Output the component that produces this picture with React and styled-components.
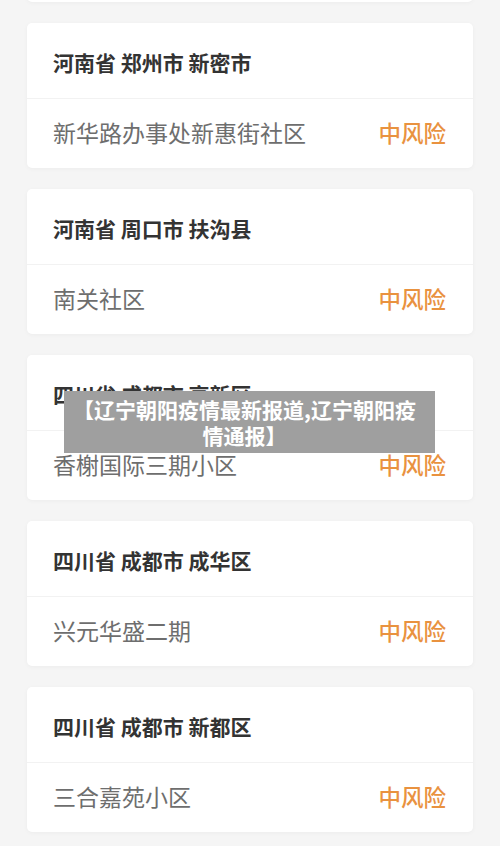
import React from "react";
import styled, { createGlobalStyle } from "styled-components";

const Global = createGlobalStyle`
  html, body { margin: 0; padding: 0; background: #f5f5f5; }
  body { font-family: "Noto Sans CJK SC", "Noto Sans", sans-serif; overflow: hidden; }
`;

const Page = styled.div`
  position: relative;
  width: 500px;
  height: 846px;
  overflow: hidden;
  background: #f5f5f5;
`;

const List = styled.div`
  display: flex;
  flex-direction: column;
  gap: 21px;
  padding: 0 27px;
  margin-top: -143px;
`;

const Card = styled.div`
  background: #ffffff;
  border-radius: 5px;
  box-shadow: 0 1px 4px rgba(0, 0, 0, 0.04);
  display: flex;
  flex-direction: column;
`;

const Header = styled.div`
  box-sizing: border-box;
  height: 76px;
  padding: 3px 26px 0;
  display: flex;
  align-items: center;
  font-size: 21px;
  font-weight: 700;
  color: #333333;
  border-bottom: 1px solid #f2f2f2;
  white-space: pre;
`;

const Body = styled.div`
  box-sizing: border-box;
  height: 69px;
  padding: 0 27px 3px 26px;
  display: flex;
  align-items: center;
  justify-content: space-between;
`;

const Place = styled.span`
  font-size: 23px;
  color: #6e6e6e;
  font-weight: 400;
`;

const Risk = styled.span`
  font-size: 22.5px;
  font-weight: 500;
  color: ${(p) => (p.$level === "high" ? "#e5533c" : "#e9923f")};
`;

const Overlay = styled.div`
  position: absolute;
  left: 64px;
  top: 391px;
  width: 371px;
  height: 62px;
  box-sizing: border-box;
  background: #9f9f9f;
  color: #ffffff;
  font-size: 21px;
  font-weight: 700;
  line-height: 26px;
  text-align: center;
  padding: 4px 15px 4px 5px;
  display: flex;
  align-items: center;
  justify-content: center;
`;

const data = [
  { area: "河南省 郑州市 新密市", place: "青屏街道社区", risk: "中风险" },
  { area: "河南省 郑州市 新密市", place: "新华路办事处新惠街社区", risk: "中风险" },
  { area: "河南省 周口市 扶沟县", place: "南关社区", risk: "中风险" },
  { area: "四川省 成都市 高新区", place: "香榭国际三期小区", risk: "中风险" },
  { area: "四川省 成都市 成华区", place: "兴元华盛二期", risk: "中风险" },
  { area: "四川省 成都市 新都区", place: "三合嘉苑小区", risk: "中风险" },
];

export default function App() {
  return (
    <Page>
      <Global />
      <List>
        {data.map((d, i) => (
          <Card key={i}>
            <Header>{d.area}</Header>
            <Body>
              <Place>{d.place}</Place>
              <Risk $level="mid">{d.risk}</Risk>
            </Body>
          </Card>
        ))}
      </List>
      <Overlay>【辽宁朝阳疫情最新报道,辽宁朝阳疫情通报】</Overlay>
    </Page>
  );
}
